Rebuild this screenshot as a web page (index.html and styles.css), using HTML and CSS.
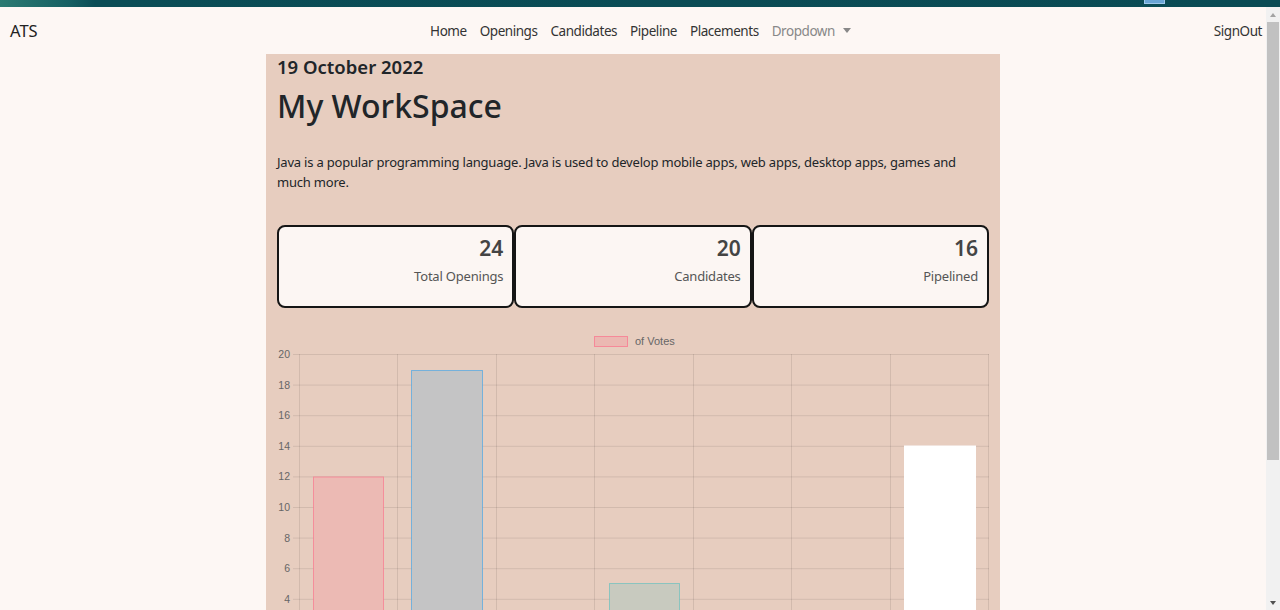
FILE: index.html
```html
<!DOCTYPE html>
<html lang="en">
<head>
<meta charset="utf-8">
<title>ATS - My WorkSpace</title>
<link rel="stylesheet" href="styles.css">
</head>
<body>
<div class="strip">
  <span class="strip-icon"></span>
</div>
<div class="app">
  <div class="page">
    <nav class="navbar">
      <a class="brand" href="#">ATS</a>
      <ul class="nav-links">
        <li><a href="#">Home</a></li>
        <li><a href="#">Openings</a></li>
        <li><a href="#">Candidates</a></li>
        <li><a href="#">Pipeline</a></li>
        <li><a href="#">Placements</a></li>
        <li><a href="#" class="dropdown">Dropdown<span class="caret"></span></a></li>
      </ul>
      <a class="signout" href="#">SignOut</a>
    </nav>
    <main class="workspace">
      <h4 class="date">19 October 2022</h4>
      <h1 class="title">My WorkSpace</h1>
      <p class="intro">Java is a popular programming language. Java is used to develop mobile apps, web apps, desktop apps, games and much more.</p>
      <div class="stats">
        <div class="stat"><div class="stat-num">24</div><div class="stat-label">Total Openings</div></div>
        <div class="stat"><div class="stat-num">20</div><div class="stat-label">Candidates</div></div>
        <div class="stat"><div class="stat-num">16</div><div class="stat-label">Pipelined</div></div>
      </div>
      <svg class="chart" width="712" height="360" viewBox="0 0 712 360">
        <g class="legend">
          <rect x="317.5" y="7.5" width="33" height="10" fill="rgba(255,99,132,0.2)" stroke="rgba(255,99,132,0.6)"/>
          <text x="358" y="16">of Votes</text>
        </g>
        <g class="grid" stroke="rgba(0,0,0,0.09)" stroke-width="1">
          <line x1="16" y1="25.5" x2="712" y2="25.5"/>
          <line x1="16" y1="56.1" x2="712" y2="56.1"/>
          <line x1="16" y1="86.7" x2="712" y2="86.7"/>
          <line x1="16" y1="117.3" x2="712" y2="117.3"/>
          <line x1="16" y1="147.9" x2="712" y2="147.9"/>
          <line x1="16" y1="178.5" x2="712" y2="178.5"/>
          <line x1="16" y1="209.1" x2="712" y2="209.1"/>
          <line x1="16" y1="239.7" x2="712" y2="239.7"/>
          <line x1="16" y1="270.3" x2="712" y2="270.3"/>
          <line x1="16" y1="300.9" x2="712" y2="300.9"/>
          <line x1="16" y1="331.5" x2="712" y2="331.5"/>
          <line x1="22.5" y1="25" x2="22.5" y2="340"/>
          <line x1="120.5" y1="25" x2="120.5" y2="340"/>
          <line x1="219.5" y1="25" x2="219.5" y2="340"/>
          <line x1="317.5" y1="25" x2="317.5" y2="340"/>
          <line x1="416.5" y1="25" x2="416.5" y2="340"/>
          <line x1="514.5" y1="25" x2="514.5" y2="340"/>
          <line x1="613.5" y1="25" x2="613.5" y2="340"/>
          <line x1="711.5" y1="25" x2="711.5" y2="340"/>
        </g>
        <g class="ticks">
          <text x="13" y="29">20</text>
          <text x="13" y="59.6">18</text>
          <text x="13" y="90.2">16</text>
          <text x="13" y="120.8">14</text>
          <text x="13" y="151.4">12</text>
          <text x="13" y="182">10</text>
          <text x="13" y="212.6">8</text>
          <text x="13" y="243.2">6</text>
          <text x="13" y="273.8">4</text>
          <text x="13" y="304.4">2</text>
          <text x="13" y="335">0</text>
        </g>
        <rect x="36.5" y="148" width="70" height="184" fill="#ecbab4" stroke="rgba(255,99,132,0.55)"/>
        <rect x="134.5" y="41.5" width="71" height="290" fill="#c4c4c5" stroke="rgba(54,162,235,0.6)"/>
        <rect x="332.5" y="254.5" width="70" height="77" fill="#c8cabf" stroke="rgba(75,192,192,0.55)"/>
        <rect x="627.5" y="117" width="71" height="215" fill="#ffffff" stroke="#ffffff"/>
      </svg>
    </main>
  </div>
  <div class="scrollbar">
    <div class="sb-btn"><span class="arrow-up"></span></div>
    <div class="sb-thumb"></div>
    <div class="sb-track"></div>
    <div class="sb-btn sb-btn-end"><span class="arrow-down"></span></div>
  </div>
</div>
</body>
</html>
```
FILE: styles.css
```css
html, body {
  margin: 0;
  padding: 0;
  height: 610px;
  overflow: hidden;
  background: #fdf7f4;
  font-family: "Noto Sans", "Open Sans", sans-serif;
  color: #212529;
}

.strip {
  height: 7px;
  background: linear-gradient(90deg, #2b7a72 0, #155f63 70px, #0b4d56 95px, #0a4b54 100%);
  display: flex;
  justify-content: flex-end;
  padding-right: 115px;
}

.strip-icon {
  width: 19px;
  height: 3px;
  background: #6aa6d6;
  border: 1px solid #9cc7ea;
  border-top: 0;
}

.app {
  height: 603px;
  display: flex;
  overflow: hidden;
}

.page {
  flex: 1;
  min-width: 0;
  overflow: hidden;
}

.navbar {
  height: 47px;
  display: grid;
  grid-template-columns: 1fr auto 1fr;
  align-items: center;
  padding: 0 4px 0 10px;
}

.navbar a {
  text-decoration: none;
}

.brand {
  font-size: 16.5px;
  color: #222;
  justify-self: start;
}

.nav-links {
  list-style: none;
  margin: 0 0 2px;
  padding: 0 0 0 9px;
  display: flex;
  gap: 13px;
}

.nav-links a {
  font-size: 13.5px;
  letter-spacing: -0.45px;
  color: #333;
}

.nav-links a.dropdown {
  color: #888;
}

.caret {
  display: inline-block;
  vertical-align: 3px;
  margin-left: 8px;
  width: 0;
  height: 0;
  border-top: 5px solid #888;
  border-left: 4.5px solid transparent;
  border-right: 4.5px solid transparent;
}

.signout {
  justify-self: end;
  font-size: 13.5px;
  letter-spacing: -0.45px;
  color: #333;
}

.workspace {
  width: 734px;
  margin: 0 auto;
  box-sizing: border-box;
  padding: 0 11px;
  background: #e7cdbf;
  height: 800px;
}

.date {
  margin: 0;
  font-size: 18.5px;
  font-weight: 600;
  line-height: 26px;
  color: #212529;
}

.title {
  margin: 4px 0 0;
  font-size: 32px;
  font-weight: 500;
  line-height: 44px;
  color: #212529;
}

.intro {
  margin: 24px 0 0;
  font-size: 13px;
  letter-spacing: -0.2px;
  line-height: 20px;
  color: #212529;
}

.stats {
  margin-top: 33px;
  display: grid;
  grid-template-columns: repeat(3, 1fr);
}

.stat {
  height: 83px;
  box-sizing: border-box;
  border: 2px solid #151515;
  border-radius: 8px;
  background: #fcf6f3;
  padding: 7px 9px 0 10px;
  text-align: right;
}

.stat-num {
  font-size: 21px;
  font-weight: 600;
  line-height: 28px;
  color: #444;
}

.stat-label {
  margin-top: 4px;
  font-size: 13px;
  letter-spacing: -0.2px;
  line-height: 20px;
  color: #555;
}

.chart {
  display: block;
  margin-top: 21px;
  overflow: visible;
}

.chart text {
  font-family: "Liberation Sans", Arial, sans-serif;
  font-size: 11px;
  fill: #666;
}

.chart .ticks text {
  text-anchor: end;
  font-size: 10.5px;
}

.scrollbar {
  width: 14px;
  flex: none;
  background: #f1f1f1;
  display: flex;
  flex-direction: column;
}

.sb-btn {
  height: 15px;
  flex: none;
  display: flex;
  align-items: center;
  justify-content: center;
}

.arrow-up {
  width: 0;
  height: 0;
  border-bottom: 4px solid #a3a3a3;
  border-left: 3.5px solid transparent;
  border-right: 3.5px solid transparent;
}

.arrow-down {
  width: 0;
  height: 0;
  border-top: 4px solid #505050;
  border-left: 3.5px solid transparent;
  border-right: 3.5px solid transparent;
}

.sb-thumb {
  height: 438px;
  flex: none;
  margin: 0 1px;
  background: #c1c1c1;
}

.sb-track {
  flex: 1;
}
```
